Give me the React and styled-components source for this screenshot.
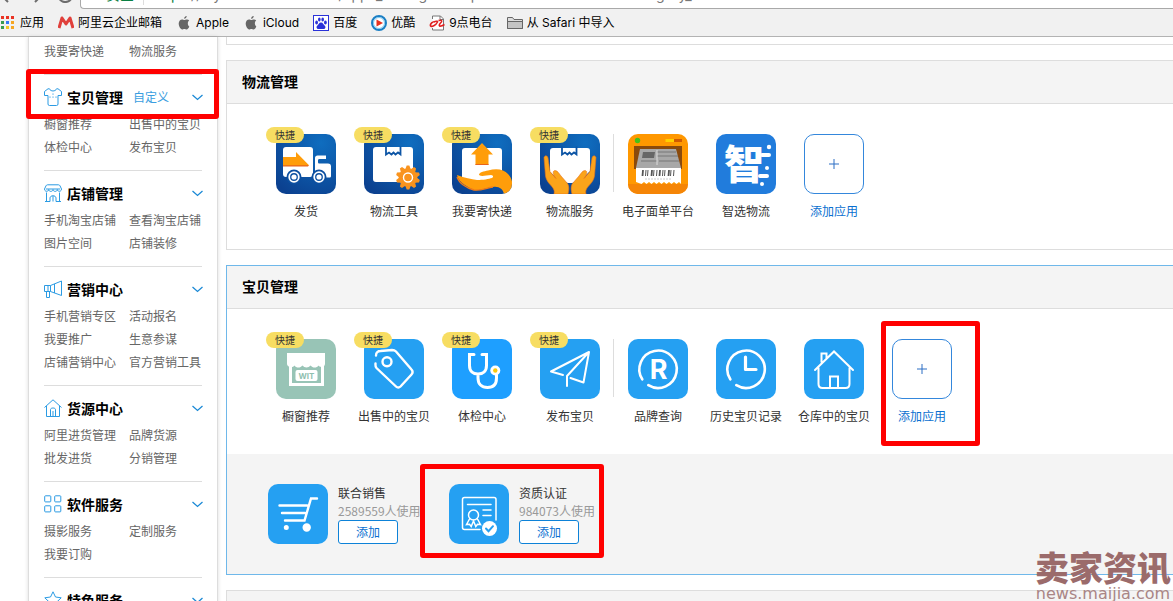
import React from "react";
import styled, { createGlobalStyle, css } from "styled-components";

const cjk = `"Noto Sans CJK SC", sans-serif`;
const SKY = "#25a0f2";

const GlobalStyle = createGlobalStyle`
  * { box-sizing: border-box; }
  body { margin: 0; background: #fff; font: 12px/18px ${cjk}; color: #333; }
  a { color: inherit; text-decoration: none; }
  button, input { font: inherit; color: inherit; margin: 0; padding: 0; border: 0; background: none; }
  button { cursor: pointer; }
  h2, h3, p, ul { margin: 0; padding: 0; font: inherit; list-style: none; }
  svg { display: block; flex: none; }
`;

const Page = styled.div`
  display: flex;
  flex-direction: column;
  height: 100vh;
  overflow: hidden;
  position: relative;
`;

/* Browser chrome */
const Toolbar = styled.header`
  flex: none;
  display: flex;
  align-items: flex-end;
  height: 9px;
  overflow: hidden;
  background: #f1f1f1;
`;
const NavKeys = styled.div`
  flex: none;
  display: flex;
  align-items: center;
  gap: 13px;
  width: 80px;
  height: 28px;
  color: #6d6d6d;
`;
const AddressField = styled.label`
  flex: 1;
  display: flex;
  align-items: center;
  height: 28px;
  padding-left: 10px;
  border: 1px solid #a9a9a9;
  border-right: 0;
  border-radius: 4px 0 0 4px;
  background: #fff;
  font: 14px/20px Inter, ${cjk};
  color: #777;
`;
const Secure = styled.span`
  padding: 0 9px 0 15px;
  border-right: 1px solid #ddd;
  color: #0a8043;
`;
const Scheme = styled.span`
  padding-left: 10px;
  color: #0a8043;
`;
const UrlInput = styled.input`
  flex: 1;
  min-width: 0;
`;
const Bookmarks = styled.nav`
  flex: none;
  display: flex;
  align-items: center;
  gap: 14px;
  height: 28px;
  border-bottom: 1px solid #b3b3b3;
  background: #f1f1f1;
  white-space: nowrap;
`;
const Bookmark = styled.a`
  display: flex;
  align-items: center;
  gap: 4px;
  font: 12px/18px Inter, ${cjk};
  color: #000;
`;

/* Layout */
const Body = styled.div`
  flex: 1;
  min-height: 0;
  display: flex;
  align-items: flex-start;
  gap: 8px;
  padding-left: 28px;
`;
const Sidebar = styled.aside`
  flex: none;
  width: 190px;
  padding: 2px 15px 0;
  border: solid #ddd;
  border-width: 0 1px;
  box-shadow: 0 0 4px rgba(0, 0, 0, 0.14);
`;
const Group = styled.section`
  position: relative;
  padding-bottom: 12px;
  & + & { border-top: 1px solid #ddd; }
`;
const GroupHead = styled.div`
  display: flex;
  align-items: center;
  height: 30px;
  margin-top: 7px;
`;
const GroupTitle = styled.h3`
  margin-left: 5px;
  font-size: 14px;
  font-weight: 700;
  color: #000;
`;
const Customize = styled.a`
  margin-left: 10px;
  color: #3a9ee0;
`;
const Toggle = styled.button`
  display: flex;
  margin: 0 -1px 0 auto;
`;
const LinkGrid = styled.ul`
  display: grid;
  grid-template-columns: 85px 1fr;
  line-height: 23px;
  white-space: nowrap;
  color: #666;
`;

const Main = styled.main`
  flex: 1;
  min-width: 0;
  display: flex;
  flex-direction: column;
  gap: 15px;
`;
const Panel = styled.section`
  border: 1px solid ${(p) => (p.$active ? "#6fb8ea" : "#ddd")};
  border-right: 0;
  ${(p) => p.$tail && css`border-top: 0; height: 8px;`}
`;
const PanelTitle = styled.h2`
  height: 43px;
  padding-left: 15px;
  border-bottom: 1px solid #ddd;
  background: #f4f4f4;
  font-size: 14px;
  line-height: 40px;
  font-weight: 700;
  color: #000;
`;
const Tiles = styled.div`
  display: flex;
  height: 145px;
  padding: 30px 0 0 35px;
`;
const Tile = styled.a`
  position: relative;
  flex: none;
  display: flex;
  flex-direction: column;
  align-items: center;
  gap: 8px;
  width: 88px;
  height: 86px;
  white-space: nowrap;
`;
const AddTile = styled(Tile)`
  color: #0a6fd0;
`;
const AddBox = styled.span`
  display: grid;
  place-items: center;
  width: 60px;
  height: 60px;
  border: 1px solid #3487dc;
  border-radius: 10px;
`;
const Quick = styled.span`
  position: absolute;
  top: -7px;
  left: 4px;
  width: 38px;
  height: 16px;
  border-radius: 8px;
  background: #f7dd62;
  font-size: 10px;
  line-height: 16px;
  text-align: center;
`;
const Separator = styled.i`
  flex: none;
  width: 1px;
  height: 58px;
  margin-left: -1px;
  background: #ddd;
`;
const Suggestions = styled.div`
  display: flex;
  height: 120px;
  padding: 30px 0 0 41px;
  background: #f4f4f4;
`;
const Suggestion = styled.article`
  position: relative;
  flex: none;
  display: flex;
  gap: 10px;
  width: 181px;
  height: 60px;
  white-space: nowrap;
`;
const Users = styled.p`
  color: #999;
`;
const AddButton = styled.button`
  display: block;
  width: 60px;
  height: 24px;
  border: 1px solid #0d82d8;
  border-radius: 3px;
  background: #fff;
  color: #0a6fd0;
`;

/* Red frames drawn over the areas being pointed out */
const Mark = styled.span`
  position: absolute;
  z-index: 2;
  left: ${(p) => p.$x}px;
  top: ${(p) => p.$y}px;
  width: ${(p) => p.$w}px;
  height: ${(p) => p.$h}px;
  border: 5px solid #f00;
  border-radius: 3px;
  pointer-events: none;
`;
const Watermark = styled.div`
  position: absolute;
  z-index: 3;
  right: 2px;
  bottom: 0;
  text-align: center;
  color: #9b6b6b;
`;
const WatermarkName = styled.div`
  font-size: 34px;
  line-height: 38px;
  font-weight: 900;
`;
const WatermarkUrl = styled.div`
  font: 16px/15px "DejaVu Sans", sans-serif;
  color: #a98585;
`;

/* Bookmark icons, 16px */
const APPLE = "M10.7 1c.1 1.500-1.200 2.800-2.600 2.800C8 2.400 9.300 1.100 10.700 1zM13.300 11.400c-.7 1.600-1.600 3-2.700 3-.9 0-1.200-.5-2.200-.5s-1.400.5-2.200.5C4.500 14.400 2.700 11.300 2.700 8.600c0-2.700 1.700-4.200 3.400-4.200.9 0 1.700.6 2.300.6.6 0 1.500-.7 2.700-.6.8 0 1.600.4 2.100 1.100-1.900 1.100-1.700 4.900.1 5.900z";
const favicons = {
  apps: ["#ea3323", "#ea3323", "#ea3323", "#3a9b4f", "#3478f6", "#f5a623", "#3a9b4f", "#f5c623", "#f5a623"].map((c, i) => (
    <rect key={i} x={1 + (i % 3) * 5} y={1 + Math.floor(i / 3) * 5} width="3" height="3" fill={c} />
  )),
  mail: <path d="M1 13 4 3l4 6 4-6 3 10" fill="none" stroke="#e0403b" strokeWidth="3" strokeLinejoin="round" />,
  apple: <path d={APPLE} fill="#666" />,
  baidu: (
    <g fill="#2a32d8">
      <rect x=".5" y=".5" width="15" height="15" fill="#fff" stroke="#2a32d8" />
      <ellipse cx="3.600" cy="7.500" rx="1.400" ry="1.900" /><ellipse cx="6.300" cy="4.500" rx="1.300" ry="2" />
      <ellipse cx="9.700" cy="4.500" rx="1.300" ry="2" /><ellipse cx="12.400" cy="7.500" rx="1.400" ry="1.900" />
      <path d="M8 7.500c2 0 2.400 2 3.800 3.200 1.300 1.300.5 3.300-1.300 3.300h-5c-1.800 0-2.600-2-1.300-3.300C5.600 9.500 6 7.500 8 7.500z" />
    </g>
  ),
  youku: (
    <g>
      <circle cx="8" cy="8" r="7" fill="#fff" stroke="#1b7fc4" strokeWidth="2" />
      <circle cx="8" cy="8" r="5.500" fill="none" stroke="#7cc6ef" />
      <path d="M5.500 4.500 12 8l-6.500 3.500z" fill="#e8321f" />
    </g>
  ),
  radio: (
    <g fill="none">
      <path d="M3.500 4V1h8l3 3v11h-11v-2" fill="#fff" stroke="#777" /><path d="M11 1v3.500h3.500" stroke="#777" />
      <path d="M7 6.500C3.500 6 .8 9 1.500 10.800c.8 1.700 5.500-.6 7-3.800.4-1.500-3-.5-3.500.5M9.500 5.500c3.500-1 4 .5 2 2.500-1.500 1.500-2 3.500.5 3 1.200-.2 2.200-.8 3.500-1.500" stroke="#e02020" strokeWidth="1.600" />
    </g>
  ),
  folder: (
    <g stroke="#666">
      <path d="M.5 13.500v-11h5l1.500 2h8.500v9z" fill="#ddd" /><path d="M.5 6.500h15v7H.5z" fill="#c4c4c4" />
    </g>
  ),
};
const bookmarks = [
  ["apps", "应用"], ["mail", "阿里云企业邮箱"], ["apple", "Apple"], ["apple", "iCloud"],
  ["baidu", "百度"], ["youku", "优酷"], ["radio", "9点电台"], ["folder", "从 Safari 中导入"],
];

/* Sidebar icons, 18px line drawings */
const menuIcons = {
  shirt: "M5.500 .8H4L.5 3.500v4h3.500v8.500q0 1.500 1.500 1.500h7q1.500 0 1.500-1.500V7.500h3.500v-4L14 .8h-1.500C11.500 3.700 6.500 3.700 5.500 .8zM9 5.500v1.200M9 8.500v1.200M6 8.500v1.200M12 8.500v1.200",
  shop: "M3.500 .8h11q1 0 1.500 1l1.500 3.200c0 3-4 3-4.200.5 0 2.500-4.300 2.500-4.300 0 0 2.500-4.300 2.500-4.300 0C4.500 8 .5 8 .5 5L2 1.800q.5-1 1.500-1zM2 5h14M2.500 8.500v9h3.500v-3.500c0-3 6-3 6 0v3.500h3.500v-9M9 12v5.500M1 17.500h5M12 17.500h5",
  horn: "M.5 5.500h6v6h-6zM6.500 5.500 17.500 1v14.500L6.500 11.500M10.500 4v9M2.500 11.500v6h3v-6M4 5.500v6",
  house: "M.5 8.500 9 .8l8.500 7.700M2.500 7v10.500h13V7M6.500 17.500v-7c0-2 5-2 5 0v7M9 12v5",
  grid: "M1.500 .8h4.500q.8 0 .8.8v4.500q0 .8-.8.8H1.500q-.8 0-.8-.8V1.600q0-.8.8-.8zM11.500 .8H16q.8 0 .8.8v4.500q0 .8-.8.8h-4.500q-.8 0-.8-.8V1.600q0-.8.8-.8zM1.500 10.800h4.500q.8 0 .8.8v4.500q0 .8-.8.8H1.500q-.8 0-.8-.8v-4.500q0-.8.8-.8zM11.500 10.800H16q.8 0 .8.8v4.500q0 .8-.8.8h-4.500q-.8 0-.8-.8v-4.500q0-.8.8-.8z",
  star: "M9 .8 11.500 6l5.700.8-4.200 4 1 5.700-5-2.700-5 2.700 1-5.700-4.200-4L6.500 6z",
};
const menu = [
  { links: ["我要寄快递", "物流服务"] },
  { icon: "shirt", title: "宝贝管理", custom: true, links: ["橱窗推荐", "出售中的宝贝", "体检中心", "发布宝贝"] },
  { icon: "shop", title: "店铺管理", links: ["手机淘宝店铺", "查看淘宝店铺", "图片空间", "店铺装修"] },
  { icon: "horn", title: "营销中心", links: ["手机营销专区", "活动报名", "我要推广", "生意参谋", "店铺营销中心", "官方营销工具"] },
  { icon: "house", title: "货源中心", links: ["阿里进货管理", "品牌货源", "批发进货", "分销管理"] },
  { icon: "grid", title: "软件服务", links: ["摄影服务", "定制服务", "我要订购"] },
  { icon: "star", title: "特色服务", links: [] },
];

/* App icons, 60px */
const RING = "M14.300 40.300A18.700 18.700 0 1 1 20.300 46.200";
const TAPE = <path d="M22 12.500v8l3-2 2.500 2 2-2 2 2 2.500-2 2.500 2v-8" fill="none" stroke="#0d55a5" strokeWidth="1.800" />;
const HAND = "M4 23.500c1-2.500 3.500-2 4 .5l2 13.500 6 7c-4-5-3-8-1-8 2.500 0 4 3 6 5.500l6.500 7.500c2 2.500 1.500 7 .5 10.500H14c1-4-1-6-3.500-9-3-3-4.500-6-5-9z";
const ORANGE = "#ff9d0a";
const gear = Array.from({ length: 10 }, (_, i) => i * 36);
const bars = [15, 18, 20, 24, 26, 29, 32, 35, 37, 41, 43, 46];

const art = {
  truck: (
    <>
      <rect x="7" y="13" width="30" height="30" rx="3" fill="#fff" />
      <path d="M7 31h26l-1 1.500H7z" fill="#e8641b" /><path d="M7 23h13v-5l13 13.300H7z" fill={ORANGE} />
      <path d="M39 24c0-1.500 1-2.500 2.500-2.500H50V25h-6.500c-1 0-1.500.5-1.500 1.500v1.500c0 1 .5 1.500 1.500 1.500H52c2 0 3 1.200 3 3V42c0 1-.7 1.500-1.500 1.500H39z" fill="#fff" />
      {[18, 43].map((x) => (
        <g key={x}><circle cx={x} cy="43" r="7.500" fill="#0c4fa0" /><circle cx={x} cy="43" r="4.800" fill="#0c4fa0" stroke="#fff" strokeWidth="1.800" /><circle cx={x} cy="43" r="2.600" fill="#fff" /></g>
      ))}
    </>
  ),
  tools: (
    <>
      <rect x="9" y="13" width="40" height="35" rx="3" fill="#fff" />{TAPE}
      <g fill="#f9931e">
        {gear.map((a) => <path key={a} d="M41 36 42.700 31.500h2.600l1.700 4.500z" transform={`rotate(${a} 44 43.500)`} />)}
        <circle cx="44" cy="43.500" r="9.300" />
      </g>
      <circle cx="44" cy="43.500" r="4.500" fill="#f9931e" stroke="#fff" strokeWidth="1.400" />
    </>
  ),
  send: (
    <>
      <rect x="10" y="14" width="40" height="34" rx="3" fill="#fff" />
      <path d="M30 9 41 20.500h-4.500V31h-13V20.500H19z" fill={ORANGE} /><path d="M23.500 30h13v1h-13z" fill="#e8641b" />
      <path d="M5 41c8 3 14 4 20 5 6 0 12-1 15-2 2-1 1-3-1-3-5 0-9 2-12 0 0-3 5-3.500 9-4.500 9-2.500 16-1 20 3.500 4 4 5 10 4 14-1 4-4 6-8 6-1-5-5-8-11-7-7 .5-12 4-19 3C11 51 6 46 5 41z" fill={ORANGE} />
      <path d="M5 43c2 6 9 11 17 13 7 1 12-2 19-3" fill="none" stroke="#ee7a1b" strokeWidth="1.300" />
    </>
  ),
  serve: (
    <>
      <path d="M10 17q0-3 3-3h34q3 0 3 3v20L40 47l-8 2h-4l-8-2-10-9z" fill="#fff" />{TAPE}
      <g fill="#fba41a" stroke="#e8741b" strokeWidth=".6"><path d={HAND} /><path d={HAND} transform="matrix(-1 0 0 1 60 0)" /></g>
    </>
  ),
  sheet: (
    <>
      <path d="M0 50h60v10H0z" fill="#f58506" />
      <circle cx="9.500" cy="6.500" r="2.700" fill="#45c01a" />
      <path d="M37.500 5H46v3h-8.500z" fill="#ffd000" /><path d="M46 5h8v3h-8z" fill="#d05a00" />
      <path d="M6 12h48v23H6z" fill="#8a4a0c" /><path d="M12 15h36l5 19H8z" fill="#a8a8a8" />
      <path d="M15 18h12l-1 6H14z" fill="#666" /><path d="M29 18h19M29 22h21M13 27h16M31 27h20" stroke="#777" /><path d="M29 16v15" stroke="#ddd" />
      <path d="M8 34h45v16l-2-2-2.500 2-2.500-2-2.500 2-2.500-2-2.500 2-2.500-2-2.500 2-2.500-2-2.500 2-2.500-2-2.500 2-2.500-2-2.500 2-2.500-2-2.500 2L8 48z" fill="#fff" />
      {bars.map((x, i) => <path key={x} d={`M${x} 36l-.5 6`} stroke="#555" strokeWidth={i % 3 ? 1 : 1.8} />)}
      <path d="M17 45h26" stroke="#ccc" strokeDasharray="2 1" />
    </>
  ),
  smart: (
    <>
      <text x="28" y="45" fontSize="40" fontWeight="900" textAnchor="middle" fill="#fff" fontFamily='"Noto Sans CJK SC", sans-serif'>智</text>
      <path d="M46 21h7M44 42h7" stroke="#fff" strokeWidth="4" strokeLinecap="round" />
      <circle cx="53" cy="13" r="2.200" fill="#fff" /><circle cx="51" cy="34" r="2" fill="#fff" /><circle cx="46" cy="50" r="2" fill="#fff" />
    </>
  ),
  wit: (
    <>
      <path d="M11 14h38v11c0 3-5 4-6.500 1.500-2 3-6 2.500-8 0-2 2.500-6 2.500-8 0-2 2.500-6 3-8 0C16.500 29.500 11 28 11 25z" fill="#fff" />
      <path d="M14.500 27v18.500h32V27" fill="none" stroke="#fff" strokeWidth="3" />
      <rect x="19.500" y="31" width="22" height="11" rx="2" fill="#fff" />
      <text x="30.500" y="39.500" fontSize="8" fontWeight="700" textAnchor="middle" fill="#8fbfb0" fontFamily="Inter, sans-serif">WIT</text>
    </>
  ),
  tag: (
    <g fill="none" stroke="#fff" strokeWidth="2.400" strokeLinecap="round">
      <path d="M12 16.500c0-3 2-4.500 4.500-4.500L28 11c2 0 3 .5 4 1.500l15.500 18c1.500 1.500 1.500 3.500 0 5L36.500 47.500c-1.500 1.500-3 1.500-4.500 0L12.500 29c-1.500-1.500-1-3-1-4.500" /><circle cx="23" cy="22.700" r="4.500" />
    </g>
  ),
  steth: (
    <>
      <path d="M22 15.500h-4.500v11C17.500 32 21 35 26 35s8.500-3 8.500-8.500v-11H30M26 35v4c0 6 3.500 9.500 9.500 9.500S44.500 45 44.500 39v-3" fill="none" stroke="#fff" strokeWidth="3" strokeLinecap="round" />
      <circle cx="43.300" cy="31.500" r="5" fill="#fff" /><circle cx="43.300" cy="31.500" r="2.200" fill="#f9c80e" />
    </>
  ),
  plane: <path d="M23 36 11 32.500 49 13 43.500 43.500 30.500 39M49 13 27 37v10" fill="none" stroke="#fff" strokeWidth="2" strokeLinecap="round" strokeLinejoin="round" />,
  brand: (
    <>
      <path d={RING} fill="none" stroke="#fff" strokeWidth="2.600" strokeLinecap="round" />
      <text x="30.500" y="40" fontSize="27" fontWeight="700" textAnchor="middle" fill="#fff" fontFamily="Inter, sans-serif">R</text>
    </>
  ),
  clock: (
    <g fill="none" stroke="#fff" strokeLinecap="round"><path d={RING} strokeWidth="2.600" /><path d="M29.500 18v12.500H40" strokeWidth="3.200" strokeLinejoin="round" /></g>
  ),
  home: (
    <g fill="none" stroke="#fff" strokeWidth="2" strokeLinecap="round">
      <path d="M11 31 30 12.500 49 31M14.500 29v16c0 2.500 1.500 4 4 4h23c2.500 0 4-1.500 4-4V29M17.500 23v-8.500h5V19M26 48.500V37.500h8v11" />
    </g>
  ),
  cart: (
    <g fill="none" stroke="#fff" strokeWidth="2.400" strokeLinecap="round">
      <path d="M49 14.500h-6L36.500 36.500H17M11.500 21.500H39M14 29h23" /><circle cx="18.300" cy="43.500" r="1.300" fill="#fff" /><circle cx="38.700" cy="43.500" r="3" fill="#fff" />
    </g>
  ),
  cert: (
    <g fill="none" stroke="#fff" strokeWidth="1.500" strokeLinecap="round">
      <path d="M31 45.500H15.500q-2 0-2-2v-28q0-2 2-2h29.500q2 0 2 2V36M18.500 20.500H42M34 26h8M34 31.500h8" />
      <circle cx="24.500" cy="31" r="5" /><path d="m20.500 35-3 5.500 3-.3 1.700 2.300 2.300-5.500 2.300 5.500 1.700-2.300 3 .3-3-5.500" />
      <circle cx="40.500" cy="44.500" r="7.500" fill="#fff" stroke="none" /><path d="m37 44.500 2.500 2.700 4.500-5" stroke={SKY} strokeWidth="2" />
    </g>
  ),
};

const AppArt = ({ name, fill = SKY }) => (
  <svg width="60" height="60" viewBox="0 0 60 60" aria-hidden="true">
    <defs>
      <radialGradient id="deep" cx=".75" cy=".15" r="1"><stop offset="0" stopColor="#0f6dbf" /><stop offset="1" stopColor="#0b4190" /></radialGradient>
      <clipPath id="tile"><rect width="60" height="60" rx="10" /></clipPath>
    </defs>
    <g clipPath="url(#tile)"><rect width="60" height="60" fill={fill} />{art[name]}</g>
  </svg>
);

const panels = [
  {
    title: "物流管理",
    apps: [
      ["truck", "发货", "url(#deep)"], ["tools", "物流工具", "url(#deep)"], ["send", "我要寄快递", "url(#deep)"], ["serve", "物流服务", "url(#deep)"],
      ["sheet", "电子面单平台", "#ff9800"], ["smart", "智选物流", "#217cdc"],
    ],
  },
  {
    title: "宝贝管理",
    active: true,
    apps: [
      ["wit", "橱窗推荐", "#98c4b6"], ["tag", "出售中的宝贝"], ["steth", "体检中心", "#1e9fff"], ["plane", "发布宝贝"],
      ["brand", "品牌查询"], ["clock", "历史宝贝记录"], ["home", "仓库中的宝贝"],
    ],
    suggestions: [
      { icon: "cart", name: "联合销售", users: "2589559人使用" },
      { icon: "cert", name: "资质认证", users: "984073人使用", marked: true },
    ],
  },
];
const QUICK_COUNT = 4;

const MenuGroup = ({ icon, title, custom, links }) => (
  <Group>
    {title && (
      <GroupHead>
        <svg width="18" height="18" viewBox="0 0 18 18" fill="none" stroke="#2b9be3" aria-hidden="true"><path d={menuIcons[icon]} /></svg>
        <GroupTitle>{title}</GroupTitle>
        {custom && <Customize href="#custom">自定义</Customize>}
        <Toggle aria-label={`收起${title}`}>
          <svg width="11" height="7" viewBox="0 0 11 7" fill="none" stroke="#1c8ad6" strokeWidth="1.300"><path d="m.5 1 5 4.500 5-4.500" /></svg>
        </Toggle>
      </GroupHead>
    )}
    <LinkGrid>{links.map((l) => <li key={l}><a href="#menu">{l}</a></li>)}</LinkGrid>
    {custom && <Mark $x={-18} $y={-6} $w={193} $h={50} />}
  </Group>
);

const AppPanel = ({ title, active, apps, suggestions }) => (
  <Panel $active={active}>
    <PanelTitle>{title}</PanelTitle>
    <Tiles>
      {apps.map(([icon, name, fill], i) => (
        <React.Fragment key={name}>
          {i === QUICK_COUNT && <Separator />}
          <Tile href="#app">
            <AppArt name={icon} fill={fill} />
            {i < QUICK_COUNT && <Quick>快捷</Quick>}
            <span>{name}</span>
          </Tile>
        </React.Fragment>
      ))}
      <AddTile as="button">
        <AddBox>
          <svg width="10" height="10" viewBox="0 0 10 10" stroke="#2c6fc4" aria-hidden="true"><path d="M5 0v10M0 5h10" /></svg>
        </AddBox>
        <span>添加应用</span>
        {active && <Mark $x={3} $y={-18} $w={99} $h={125} />}
      </AddTile>
    </Tiles>
    {suggestions && (
      <Suggestions>
        {suggestions.map((s) => (
          <Suggestion key={s.name}>
            <AppArt name={s.icon} />
            <div>
              <p>{s.name}</p>
              <Users>{s.users}</Users>
              <AddButton>添加</AddButton>
            </div>
            {s.marked && <Mark $x={-29} $y={-20} $w={184} $h={94} />}
          </Suggestion>
        ))}
      </Suggestions>
    )}
  </Panel>
);

export default function App() {
  return (
    <Page>
      <GlobalStyle />
      <Toolbar>
        <NavKeys>
          <svg width="16" height="16" viewBox="0 0 16 16" fill="none" stroke="currentColor" strokeWidth="2"><path d="m8 1-7 7 7 7M1 8h12" /></svg>
          <svg width="16" height="16" viewBox="0 0 16 16" fill="none" stroke="currentColor" strokeWidth="2"><path d="m6 1 7 7-7 7M1 8h12" /></svg>
          <svg width="16" height="16" viewBox="0 0 16 16" fill="none" stroke="currentColor" strokeWidth="2"><path d="M13 4a7 7 0 1 0 1 6M14 1v5H9" /></svg>
        </NavKeys>
        <AddressField>
          <Secure>安全</Secure>
          <Scheme>https</Scheme>
          <UrlInput aria-label="地址" readOnly value="://myseller.taobao.com/apps_setting.htm?spm=a1z.home.1.0.0.list&category_id" />
        </AddressField>
      </Toolbar>
      <Bookmarks>
        {bookmarks.map(([icon, name]) => (
          <Bookmark key={name} href="#bookmark">
            <svg width="16" height="16" viewBox="0 0 16 16" aria-hidden="true">{favicons[icon]}</svg>
            {name}
          </Bookmark>
        ))}
      </Bookmarks>
      <Body>
        <Sidebar>{menu.map((g, i) => <MenuGroup key={i} {...g} />)}</Sidebar>
        <Main>
          <Panel $tail />
          {panels.map((p) => <AppPanel key={p.title} {...p} />)}
          <Panel><PanelTitle /></Panel>
        </Main>
      </Body>
      <Watermark>
        <WatermarkName>卖家资讯</WatermarkName>
        <WatermarkUrl>news.maijia.com</WatermarkUrl>
      </Watermark>
    </Page>
  );
}
